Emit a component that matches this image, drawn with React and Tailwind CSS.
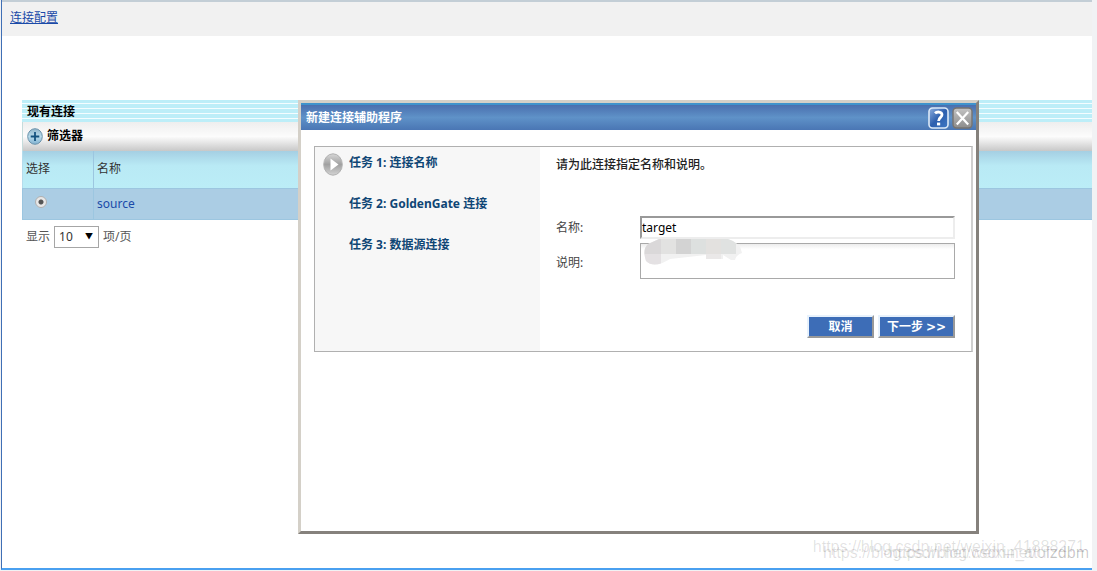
import React, { useState } from "react";

const tasks = [
  { id: 1, label: "任务 1: 连接名称" },
  { id: 2, label: "任务 2: GoldenGate 连接" },
  { id: 3, label: "任务 3: 数据源连接" },
];

const connections = [{ name: "source" }];

const PlusIcon = () => (
  <svg width="16" height="17" viewBox="0 0 16 17" aria-hidden="true">
    <defs>
      <linearGradient id="plusFill" x1="0" y1="0" x2="0" y2="1">
        <stop offset="0" stopColor="#8fb3c9" />
        <stop offset="0.5" stopColor="#b9dcec" />
        <stop offset="1" stopColor="#7fb0d0" />
      </linearGradient>
    </defs>
    <ellipse cx="8" cy="8.5" rx="7.3" ry="7.8" fill="url(#plusFill)" stroke="#6c93ab" />
    <path d="M8 4v9M3.7 8.5h8.6" stroke="#14527f" strokeWidth="1.8" />
  </svg>
);

const PlayIcon = () => (
  <svg width="20" height="23" viewBox="0 0 20 23" aria-hidden="true">
    <defs>
      <linearGradient id="playFill" x1="0" y1="0" x2="0" y2="1">
        <stop offset="0" stopColor="#d8d8d8" />
        <stop offset="0.5" stopColor="#a0a0a0" />
        <stop offset="1" stopColor="#d4d4d4" />
      </linearGradient>
    </defs>
    <ellipse cx="10" cy="11.5" rx="9.3" ry="10.7" fill="url(#playFill)" stroke="#b0b0b0" />
    <path d="M7.5 5.5L15.5 11.5L7.5 17.5Z" fill="#fff" />
  </svg>
);

const HelpIcon = () => (
  <svg width="21" height="22" viewBox="0 0 21 22" aria-hidden="true">
    <defs>
      <linearGradient id="helpFill" x1="0" y1="0" x2="1" y2="1">
        <stop offset="0" stopColor="#8fb0e0" />
        <stop offset="0.5" stopColor="#2d5fae" />
        <stop offset="1" stopColor="#3f78c4" />
      </linearGradient>
    </defs>
    <rect x="1" y="1" width="19" height="20" rx="3.5" fill="url(#helpFill)" stroke="#dce9f7" strokeWidth="1.6" />
    <path d="M7 6.2C8.6 4.6 14 4.2 14 7.8C14 10.4 10.6 10.4 10.6 14" fill="none" stroke="#fff" strokeWidth="2.8" />
    <rect x="9" y="15.6" width="3.2" height="2.8" fill="#fff" />
  </svg>
);

const CloseIcon = () => (
  <svg width="21" height="22" viewBox="0 0 21 22" aria-hidden="true">
    <defs>
      <linearGradient id="closeFill" x1="0" y1="0" x2="0" y2="1">
        <stop offset="0" stopColor="#c4c4c4" />
        <stop offset="0.5" stopColor="#a8a8a8" />
        <stop offset="1" stopColor="#8c8c8c" />
      </linearGradient>
    </defs>
    <rect x="1" y="1" width="19" height="20" rx="3.5" fill="url(#closeFill)" stroke="#77736f" strokeWidth="1.4" />
    <path d="M4.8 5L16.2 17.4M16.2 5L4.8 17.4" stroke="#fff" strokeWidth="2.2" />
  </svg>
);

// Pixelated blob hiding the description text
const MaskedText = () => (
  <svg width="98" height="26" viewBox="0 0 98 26" aria-hidden="true">
    <defs>
      <clipPath id="maskShape">
        <path d="M15 0H84Q97 4 98 14Q92 16 91 21H87L79 16V20H62V16L26 20Q10 30 2 22Q-2 10 4 5Z" />
      </clipPath>
    </defs>
    <g clipPath="url(#maskShape)">
      <rect width="98" height="26" fill="#f1f1f1" />
      <rect width="17" height="15" fill="#dad8d9" />
      <rect y="15" width="17" height="11" fill="#e4e1e3" />
      <rect x="17" width="15" height="15" fill="#e2e2e1" />
      <rect x="32" width="15" height="15" fill="#d3d3d3" />
      <rect x="47" width="15" height="15" fill="#dde0df" />
      <rect x="62" width="15" height="15" fill="#e3e1df" />
      <rect x="62" y="15" width="15" height="11" fill="#eae8e8" />
      <rect x="77" width="15" height="15" fill="#e0e2e1" />
    </g>
  </svg>
);

const ConnectionTable = () => (
  <section className="mt-16 ml-5">
    <h2 className="h-[22px] pl-[5px] leading-6 font-bold text-black bg-[repeating-linear-gradient(to_bottom,#bdeef8_0px,#bdeef8_3px,#f4fdff_3px,#f4fdff_4px,#bdeef8_4px,#bdeef8_5px)]">
      现有连接
    </h2>
    <div className="h-[29px] border-l border-[#c5dcdc] flex items-center bg-linear-to-b from-[#eeeeee] via-[#fcfcfc] to-[#c8c8c8]">
      <button className="flex items-center gap-1 pl-1 pb-px font-bold text-black">
        <PlusIcon />
        筛选器
      </button>
    </div>
    <table className="w-full border-collapse text-left">
      <thead>
        <tr className="h-[37px] bg-linear-to-b from-[#a5cfe3] via-[#b9eaf5] via-40% to-[#bbedf7] text-[#333]">
          <th className="w-[71px] pl-[3px] font-normal border border-[#9cc6e0] border-t-0 border-l-[#b5dcec]">选择</th>
          <th className="pl-[3px] font-normal border-b border-[#9cc6e0]">名称</th>
        </tr>
      </thead>
      <tbody>
        {connections.map((item) => (
          <tr key={item.name} className="h-[31px] bg-[#abcde4]">
            <td className="pl-3 border border-[#9cc6e0]">
              <input
                type="radio"
                name="connection"
                aria-label={item.name}
                defaultChecked
                className="block mb-1 appearance-none size-3 rounded-full border border-[#b0b0b0] bg-[radial-gradient(circle,#555_0px,#555_2px,#e8e8e8_3px)]"
              />
            </td>
            <td className="pl-[3px] border-b border-[#9cc6e0]">
              <a href="#source" className="text-[#1a4aa8]">{item.name}</a>
            </td>
          </tr>
        ))}
      </tbody>
    </table>
    <div className="flex items-center gap-1 mt-1.5 pl-1 text-[#555]">
      <label htmlFor="pageSize">显示</label>
      <div className="relative">
        <select
          id="pageSize"
          defaultValue="10"
          className="block appearance-none w-[45px] h-[22px] pl-1 border border-[#a6a6a6] bg-white text-[#333]"
        >
          <option>10</option>
          <option>25</option>
          <option>50</option>
        </select>
        <span className="absolute right-1.5 top-1.5 text-[8px] leading-2 text-black pointer-events-none">▼</span>
      </div>
      <span>项/页</span>
    </div>
  </section>
);

const ConnectionWizard = () => {
  const [name, setName] = useState("target");
  const [description, setDescription] = useState("");

  return (
    <div
      role="dialog"
      aria-labelledby="wizardTitle"
      className="absolute left-[298px] top-[100px] w-[681px] h-[434px] bg-white border-3 border-[#d4d0c8] border-r-[#85817c] border-b-[#85817c]"
    >
      <div className="h-[27px] flex items-center justify-between pl-[5px] pr-[3px] border-t-2 border-[#3f93cc] bg-linear-to-b from-[#4a6fae] via-[#5f92c8] to-[#4a76b4]">
        <h1 id="wizardTitle" className="font-bold text-white">新建连接辅助程序</h1>
        <div className="flex gap-[3px]">
          <button aria-label="帮助"><HelpIcon /></button>
          <button aria-label="关闭"><CloseIcon /></button>
        </div>
      </div>

      <div className="flex mt-4 ml-[13px] mr-[3px] h-[206px] border border-[#b0b0b0] border-r-2 border-r-[#cfcfcf]">
        <ol className="w-[225px] pt-1.5 pl-2 bg-[#f7f7f7] font-bold text-[#0f4675]">
          {tasks.map((task) => (
            <li key={task.id} className="flex gap-1.5 h-[41px]">
              <span className="w-5">{task.id === 1 && <PlayIcon />}</span>
              <span>{task.label}</span>
            </li>
          ))}
        </ol>

        <form className="flex-1 pt-2 pl-4 pr-4" onSubmit={(e) => e.preventDefault()}>
          <p className="font-medium text-[#222]">请为此连接指定名称和说明。</p>
          <div className="flex items-center mt-[41px]">
            <label htmlFor="name" className="w-[84px]">名称:</label>
            <input
              id="name"
              value={name}
              onChange={(e) => setName(e.target.value)}
              className="flex-1 h-[23px] text-black border-2 border-[#ededed] border-t-[#999] border-l-[#999] bg-white"
            />
          </div>
          <div className="flex items-center mt-1">
            <label htmlFor="description" className="w-[84px] pt-1">说明:</label>
            <div className="relative flex-1">
              <textarea
                id="description"
                value={description}
                onChange={(e) => setDescription(e.target.value)}
                className="block w-full h-9 resize-none border border-[#a9a9a9] bg-linear-to-b from-[#ededed] to-white to-15%"
              />
              <div className="absolute left-1 -top-1">
                <MaskedText />
              </div>
            </div>
          </div>
          <div className="flex justify-end gap-1 mt-9">
            <button className="w-[67px] h-[23px] font-bold text-white bg-[#3d6db7] border-2 border-[#e8f2fc] border-r-[#999] border-b-[#999]">取消</button>
            <button className="w-[77px] h-[23px] font-bold text-white bg-[#3d6db7] border-2 border-[#e8f2fc] border-r-[#999] border-b-[#999]">
              下一步 <span className="font-['DejaVu_Sans',sans-serif]">&gt;&gt;</span>
            </button>
          </div>
        </form>
      </div>
    </div>
  );
};

const Watermark = () => (
  <div className="font-['Liberation_Sans',sans-serif] text-base leading-5 text-black/12 whitespace-nowrap pointer-events-none">
    <span className="absolute right-3 bottom-3.5">https://blog.csdn.net/weixin_41888271</span>
    <span className="absolute right-2 bottom-2">https://blog.csdn.net/weixin_atuizdbm</span>
    <span className="absolute right-2 bottom-2">https://blog.csdn.net/ofzdbm</span>
  </div>
);

const App = () => {
  return (
    <div className="relative flex flex-col min-h-screen pl-px pr-[5px] pb-px bg-[#f1f2f4] text-xs leading-5 text-[#444] font-['Noto_Sans','Noto_Sans_CJK_SC',sans-serif]">
      <div className="flex-1 bg-white border-l border-l-[#3f6fb5] border-b-2 border-b-[#4aa0f0]">
        <header className="h-9 pl-2 pt-1.5 bg-[#f1f1f1] border-t-2 border-[#c3ced6]">
          <a href="#config" className="text-[#1a4aa8] underline">连接配置</a>
        </header>
        <ConnectionTable />
      </div>
      <ConnectionWizard />
      <Watermark />
    </div>
  );
};

export default App;
